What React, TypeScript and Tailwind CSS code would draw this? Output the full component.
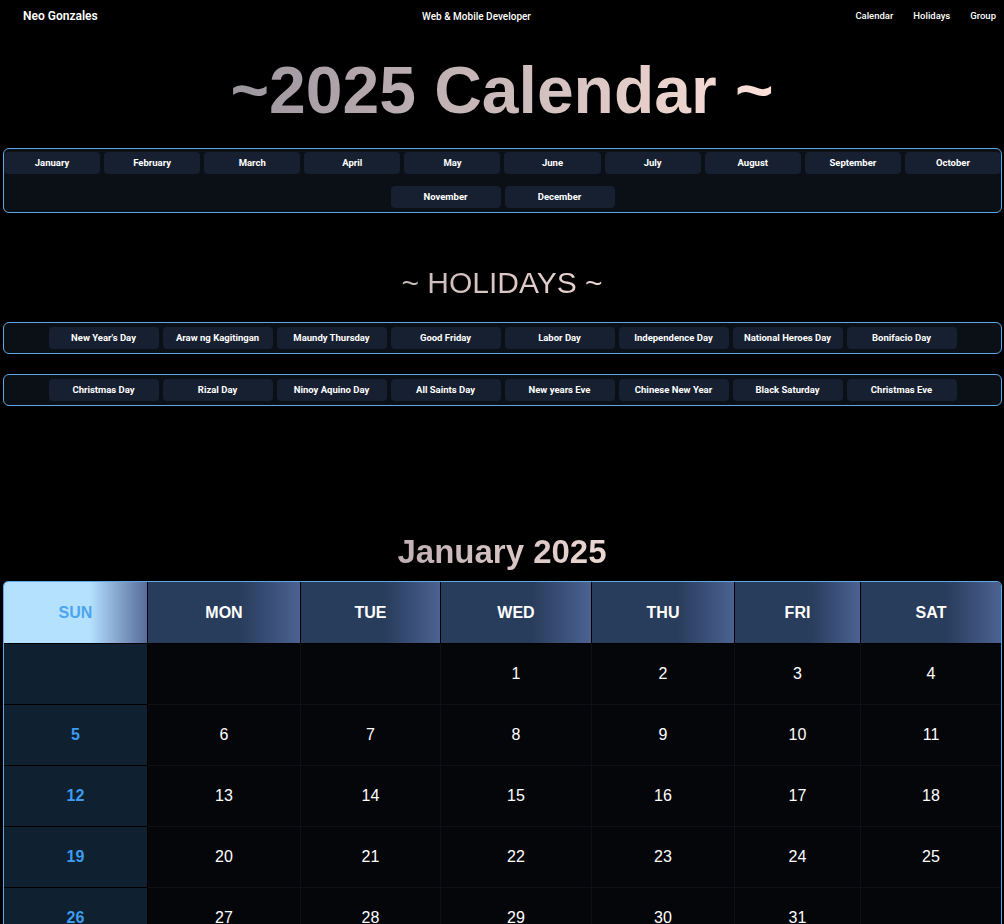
const months = [
  'January', 'February', 'March', 'April', 'May', 'June',
  'July', 'August', 'September', 'October', 'November', 'December',
];

const holidayRows = [
  ["New Year's Day", 'Araw ng Kagitingan', 'Maundy Thursday', 'Good Friday', 'Labor Day', 'Independence Day', 'National Heroes Day', 'Bonifacio Day'],
  ['Christmas Day', 'Rizal Day', 'Ninoy Aquino Day', 'All Saints Day', 'New years Eve', 'Chinese New Year', 'Black Saturday', 'Christmas Eve'],
];

const days = ['SUN', 'MON', 'TUE', 'WED', 'THU', 'FRI', 'SAT'];

const weeks: (number | null)[][] = [
  [null, null, null, 1, 2, 3, 4],
  [5, 6, 7, 8, 9, 10, 11],
  [12, 13, 14, 15, 16, 17, 18],
  [19, 20, 21, 22, 23, 24, 25],
  [26, 27, 28, 29, 30, 31, null],
];

const btn =
  'h-[22px] rounded-[4px] bg-[#172030] text-white text-[9.5px] font-bold flex items-center justify-center';

const App = () => {
  return (
    <div className="min-h-screen bg-black font-['Liberation_Sans',Arial,sans-serif] pb-10">
      {/* Navbar */}
      <nav className="h-8 flex items-center justify-between pl-[23px] pr-[8px] font-['Roboto',sans-serif] text-white">
        <span className="text-[12px] font-semibold">Neo Gonzales</span>
        <span className="text-[10px] font-medium">Web &amp; Mobile Developer</span>
        <div className="flex gap-5 text-[9.5px] font-medium">
          <a>Calendar</a>
          <a>Holidays</a>
          <a>Group</a>
        </div>
      </nav>

      {/* Title */}
      <div className="mt-5 mb-5 text-center">
        <h1 className="inline-block text-[66px] leading-[76px] font-bold bg-linear-to-r from-[#9c959e] to-[#fde1d8] bg-clip-text text-transparent">
          ~2025 Calendar ~
        </h1>
      </div>

      {/* Month picker */}
      <div className="ml-[3px] mr-[2px] border border-[#5fa7e6] rounded-[6px] bg-[#0b0f16] pt-[3px] pb-[4px] font-['Roboto',sans-serif]">
        <div className="grid grid-cols-10 gap-1">
          {months.slice(0, 10).map((m) => (
            <button key={m} className={btn}>{m}</button>
          ))}
        </div>
        <div className="flex justify-center gap-1 mt-3">
          {months.slice(10).map((m) => (
            <button key={m} className={`${btn} w-[110px]`}>{m}</button>
          ))}
        </div>
      </div>

      {/* Holidays */}
      <div className="mt-[53px] text-center">
        <h2 className="inline-block text-[30px] leading-[34px] bg-linear-to-r from-[#c8b9b9] to-[#ecd6d1] bg-clip-text text-transparent">
          ~ HOLIDAYS ~
        </h2>
      </div>

      <div className="mt-[22px] flex flex-col gap-5 font-['Roboto',sans-serif]">
        {holidayRows.map((row, i) => (
          <div key={i} className="ml-[3px] mr-[2px] border border-[#5fa7e6] rounded-[6px] bg-[#0b0f16] py-1 flex justify-center gap-1">
            {row.map((h) => (
              <button key={h} className={`${btn} w-[110px]`}>{h}</button>
            ))}
          </div>
        ))}
      </div>

      {/* Month view */}
      <div className="mt-[127px] text-center">
        <h2 className="inline-block text-[33px] leading-[37px] font-bold bg-linear-to-r from-[#bfaeb3] to-[#ecd8d2] bg-clip-text text-transparent">
          January 2025
        </h2>
      </div>

      <div className="mt-[11px] ml-[3px] mr-[2px] border border-[#5fa7e6] rounded-[5px] overflow-hidden bg-[#05060a]">
        <div className="grid grid-cols-[144px_153px_140px_151px_143px_126px_1fr]">
          {days.map((d, i) => (
            <div
              key={d}
              className={`h-[62px] flex items-center justify-center border-b border-black text-[16px] font-bold bg-linear-to-r from-60% ${
                i < 6 ? 'border-r' : ''
              } ${
                i === 0
                  ? 'from-[#b4e1fe] to-[#586c9c] text-[#4ca4f0]'
                  : 'from-[#283c5c] to-[#4c6292] text-white'
              }`}
            >
              {d}
            </div>
          ))}
          {weeks.map((week, wi) =>
            week.map((n, di) => (
              <div
                key={`${wi}-${di}`}
                className={`h-[61px] flex items-center justify-center text-[16px] border-b ${
                  di < 6 ? 'border-r' : ''
                } ${
                  di === 0
                    ? 'bg-[#0f2031] border-black text-[#3b9cf0] font-bold'
                    : 'border-[#0e1016] text-white'
                }`}
              >
                {n ?? ''}
              </div>
            ))
          )}
        </div>
      </div>
    </div>
  );
};

export default App;
